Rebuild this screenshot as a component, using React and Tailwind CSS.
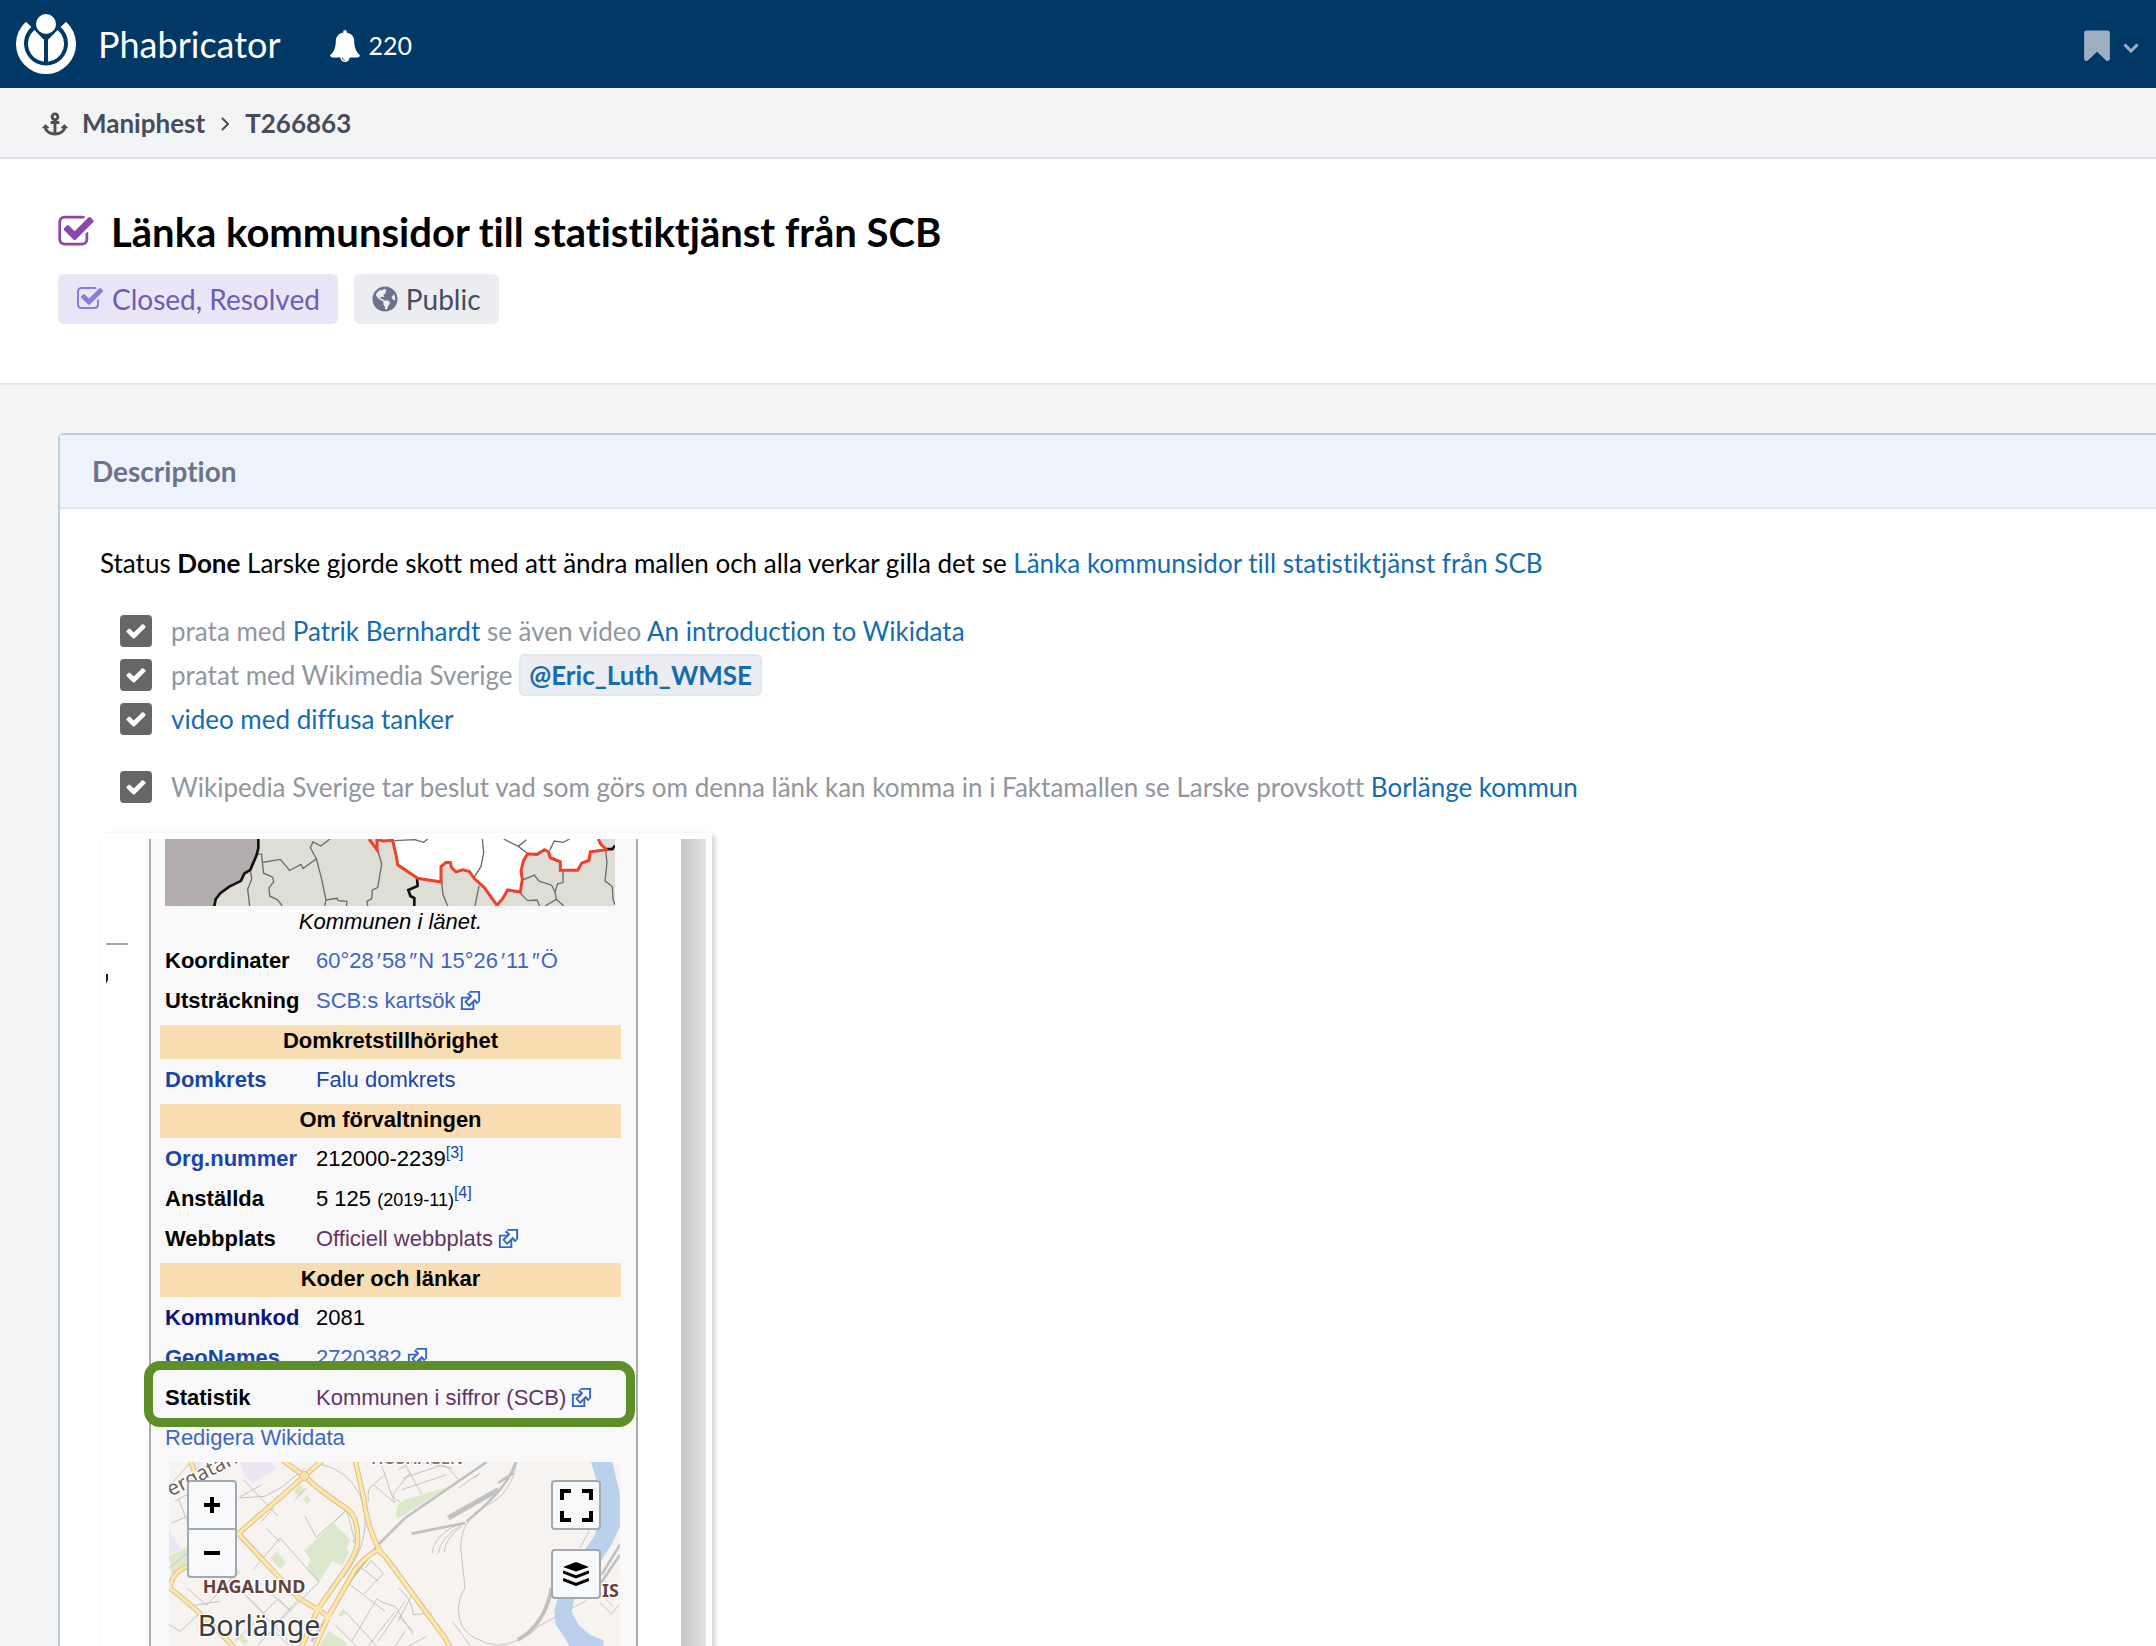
import React from "react";
import { FaAnchor, FaGlobeAmericas } from "react-icons/fa";

const BELL =
  "M912 1696q0-16-16-16-59 0-101.5-42.5t-42.5-101.5q0-16-16-16t-16 16q0 73 51.5 124.5t124.5 51.5q16 0 16-16zm816-288q0 52-38 90t-90 38h-448q0 106-75 181t-181 75-181-75-75-181h-448q-52 0-90-38t-38-90q50-42 91-88t85-119.5 74.5-158.5 50-206 19.5-260q0-152 117-282.5t307-158.5q-8-19-8-39 0-40 28-68t68-28 68 28 28 68q0 20-8 39 190 28 307 158.5t117 282.5q0 139 19.5 260t50 206 74.5 158.5 85 119.5 91 88z";
const CHECK_SQUARE =
  "M1472 930v318q0 119-84.5 203.5t-203.5 84.5h-832q-119 0-203.5-84.5t-84.5-203.5v-832q0-119 84.5-203.5t203.5-84.5h832q63 0 117 25 15 7 18 23 3 17-9 29l-49 49q-10 10-23 10-3 0-9-2-23-6-45-6h-832q-66 0-113 47t-47 113v832q0 66 47 113t113 47h832q66 0 113-47t47-113v-254q0-13 9-22l64-64q10-10 23-10 6 0 12 3 20 8 20 29zm231-489l-814 814q-24 24-57 24t-57-24l-430-430q-24-24-24-57t24-57l110-110q24-24 57-24t57 24l263 263 647-647q24-24 57-24t57 24l110 110q24 24 24 57t-24 57z";
const BOOKMARK =
  "M1420 128q23 0 44 9 33 13 52.5 41t19.5 62v1289q0 34-19.5 62t-52.5 41q-19 8-44 8-48 0-83-32l-441-424-441 424q-36 33-83 33-23 0-44-9-33-13-52.5-41t-19.5-62v-1289q0-34 19.5-62t52.5-41q21-9 44-9h1048z";
const CHECK =
  "M1671 566q0 40-28 68l-724 724-136 136q-28 28-68 28t-68-28l-136-136-362-362q-28-28-28-68t28-68l136-136q28-28 68-28t68 28l294 295 656-657q28-28 68-28t68 28l136 136q28 28 28 68z";

function Glyph({ d, className }) {
  return (
    <svg viewBox="0 0 1792 1792" className={className} fill="currentColor" aria-hidden="true">
      <path d={d} />
    </svg>
  );
}

function Logo() {
  return (
    <svg viewBox="48 42 180 180" className="size-[60px]" fill="#fff" aria-hidden="true">
      <circle cx="138" cy="72" r="30" />
      <path d="M78 65A90 90 0 1 0 198 65L182 81A66 66 0 1 1 94 81Z" />
      <path d="M103 90L132 119V185A54 54 0 0 1 103 90ZM173 90L144 119V185A54 54 0 0 0 173 90Z" />
    </svg>
  );
}

function A({ children, className = "text-[#136cb2]" }) {
  return (
    <a href="#" className={className}>
      {children}
    </a>
  );
}

function Task({ children }) {
  return (
    <li>
      <label className="flex h-11 items-center gap-[19px]">
        <span className="grid">
          <input
            type="checkbox"
            defaultChecked
            className="col-start-1 row-start-1 size-8 appearance-none rounded bg-[#666]"
          />
          <Glyph
            d={CHECK}
            className="pointer-events-none col-start-1 row-start-1 size-[22px] place-self-center text-white"
          />
        </span>
        <span className="text-[#92969d]">{children}</span>
      </label>
    </li>
  );
}

function External() {
  return (
    <svg viewBox="0 0 12 12" className="ml-1 inline-block size-[23px] align-[-4px]" aria-hidden="true">
      <path fill="#fff" stroke="#36c" d="M1.5 4.518h5.982V10.5H1.5z" />
      <path fill="#36c" d="M5.765 1H11v5.39L9.427 7.937l-1.31-1.31L5.393 9.35l-2.69-2.688 2.81-2.808L4.2 2.544z" />
      <path fill="#fff" d="m9.995 2.004.022 4.885L8.2 5.07 5.32 7.95 4.09 6.723l2.882-2.88-1.85-1.852z" />
    </svg>
  );
}

function Prime({ children }) {
  return <span className="px-0.5 italic">{children}</span>;
}

function Row({ label, children }) {
  return (
    <tr className="h-10">
      <th scope="row" className="p-0 pl-[5px] text-left">
        {label}
      </th>
      <td className="p-0">{children}</td>
    </tr>
  );
}

function Band({ children }) {
  return (
    <tr className="h-[39px]">
      <th colSpan={2} scope="colgroup" className="p-0 align-top">
        <div className="mt-1 h-[34px] bg-[#f9ddb2] leading-8">{children}</div>
      </th>
    </tr>
  );
}

function CountyMap() {
  return (
    <svg viewBox="62 30 1350 200" className="ml-[5px] h-[67px] w-[450px]" preserveAspectRatio="none" role="img" aria-label="Karta över länet">
      <rect x="62" y="30" width="1350" height="200" fill="#deded6" />
      <path fill="#b3adad" d="M62 30H342L338 75 318 122 300 133 290 155 255 172 228 192 214 210 210 230H62Z" />
      <path
        fill="#fff"
        d="M716 36L745 34 756 82 760 107 820 147 890 158V112L920 100 935 128 975 127 990 148 1020 175 1058 230 1090 182 1128 188 1134 150 1130 125 1150 74 1210 62 1248 98V123H1300L1338 68 1386 60 1362 30H716Z"
      />
      <path fill="#deded6" d="M1134 150L1130 125 1150 74 1178 76 1200 62 1212 68 1218 86 1248 98V123H1300V200H1128Z" />
      <g fill="none" stroke="#6b6b70" strokeWidth="4">
        <path d="M338 75H352L354 100 408 91 436 124 470 106 476 118 516 89 498 56 506 39 529 51 557 30M354 100L358 132 385 144 388 158 374 176 376 200 400 212 414 230M516 89L532 150 545 212 578 207 582 214 608 216 606 230M545 212L541 230M318 122L322 150 310 180 316 230M700 62L712 105 700 175 684 182 682 208 668 216 670 230" />
        <path d="M750 35L812 32 838 40 850 30M1014 30L1018 70 1010 112 988 146M892 158L896 196 910 230M1004 170L992 230M1078 30L1122 52 1148 72M1122 52L1146 32M1216 64L1230 36 1256 40 1276 30M1136 152L1170 138 1184 156 1222 168 1232 188 1240 164 1256 160V124M1232 188L1236 210 1202 230M1236 210L1258 230M1128 192L1150 214 1178 212 1186 230M1384 64L1388 100 1382 155 1404 172 1406 210 1412 226" />
      </g>
      <path fill="none" stroke="#111" strokeWidth="8" d="M342 30V58L336 80 318 122 300 133 290 155 255 172 228 192 214 210 210 230" />
      <path fill="none" stroke="#111" strokeWidth="8" d="M818 148L820 170 792 182 798 200 810 206V230M1386 60H1404L1412 50" />
      <path
        fill="none"
        stroke="#ee4129"
        strokeWidth="9"
        d="M674 30L698 62V30L716 36 745 34 756 82 760 107 820 147 890 158V112L905 100H918L922 116 935 128 955 122 975 127 990 148 1020 175 1058 228 1075 208 1090 182 1128 188 1134 150 1130 125 1138 94 1150 74 1178 76 1200 62 1212 68 1218 86 1248 98V123H1300L1312 102 1334 94 1338 68 1386 62 1368 44 1362 30"
      />
    </svg>
  );
}

const ROADS =
  "M350 15L418 64 472 18M418 64L355 120 220 237 330 355 400 430 458 464 490 486M418 64Q460 105 545 162Q580 185 578 262Q575 300 520 375L458 464M570 15Q585 80 596 130Q605 210 640 280Q650 300 660 305L745 420 840 550 880 622M640 285Q600 305 570 345L490 486 430 622M490 486L458 464 400 600M75 15L90 55M66 335Q20 355 14 400Q60 435 120 490L220 590";

function TownMap() {
  return (
    <svg viewBox="12 22 1353 600" className="h-[200px] w-[451px]" role="img" aria-label="Karta över Borlänge">
      <rect x="12" y="22" width="1353" height="600" fill="#f7f3f0" />
      <path fill="#ece6f4" d="M225 22H320L335 42 265 85 238 65ZM75 22H115L90 60ZM12 225L48 282 12 302Z" />
      <path
        fill="#dbe8cb"
        d="M506 205L556 255 545 282 552 295 532 334 502 318 462 382 426 346 436 312 418 288ZM385 110L404 90 420 106 402 126ZM414 134L426 122 438 136 426 148ZM315 310L336 290 363 324 345 342ZM12 305L66 276V330L20 362ZM692 180L700 148 720 135 850 96 700 192ZM465 570L492 528 545 565 545 622H465ZM520 480L535 462 542 474 528 488ZM190 380L220 344 226 355 195 380ZM215 550L232 540 250 560 240 572Z"
      />
      <path fill="#b9d1ec" d="M1278 22H1342L1365 120V215L1342 265 1305 325 1250 300 1290 240 1305 180V110ZM1180 430H1228L1220 470 1240 510 1275 540 1315 556 1318 622H1240L1200 550 1172 510 1168 465Z" />
      <g fill="none" stroke="#c4c4c4" strokeWidth="3">
        <path d="M12 95L75 25M30 140L66 120M20 205L68 185M40 130L66 200M225 130L300 125 350 98 420 40M235 75L338 184M290 90L220 130M12 340L66 296M290 200L325 160M302 220L345 262M265 345L345 250 462 382 375 468 300 400M215 395L302 480M420 185L454 248M454 248L545 166L570 260M508 202L545 166M560 258L580 266M390 135L425 100M68 455L165 440M66 400L125 452 200 370M340 432L210 560M340 432L375 468 280 570M45 530L100 480M12 510L45 530M395 440L320 520 370 570M245 425L400 590" />
        <path d="M470 30Q545 45 585 120Q610 190 595 250Q585 300 535 370M600 340L618 318 655 356 595 420M555 390L660 470M590 340L640 380M636 432L560 560M636 432Q650 445 690 455L745 540M510 510L600 600M690 470L590 600M720 440L640 560M540 470L640 580M720 530L680 590" />
        <path d="M610 140Q605 100 625 90L660 60 645 22M660 60Q670 100 690 145M625 90L690 145M720 30L770 118M715 70L835 30M710 105L845 60M745 22L700 45M850 40L880 75M815 22L850 40M705 140Q675 130 690 110L735 55M760 22L860 40M930 70L945 55 880 100" />
        <path d="M1055 22Q1040 120 960 155Q890 190 887 280L900 400Q880 430 880 470Q885 530 930 550Q1000 590 1060 555Q1100 540 1120 515L1260 440 1270 430M1272 230L1245 280M862 500L915 572M1306 445L1340 478 1362 450M1325 435L1345 455M802 296Q805 240 890 205M820 296Q825 250 890 210M838 292Q840 250 890 215" />
        <path d="M700 400Q740 430 745 480M745 480L800 475M700 485L745 530M720 580L785 545M700 500L740 420" />
      </g>
      <g fill="none" stroke="#c1c1c1">
        <path strokeWidth="8" d="M965 22L720 190 640 270 560 372 440 560M740 237L900 205" />
        <path strokeWidth="15" d="M850 190L1000 105" />
        <path strokeWidth="8" d="M1000 85L1045 55M1052 22Q1030 100 905 200M1365 270L1310 360" />
        <path strokeWidth="12" d="M1160 400Q1140 510 1058 556" />
        <path strokeWidth="8" d="M1365 300L1308 385" />
      </g>
      <path fill="none" stroke="#e3bd86" strokeWidth="16" strokeLinejoin="round" d={ROADS} />
      <path fill="none" stroke="#fbe8ac" strokeWidth="10" strokeLinejoin="round" d={ROADS} />
      <circle cx="418" cy="64" r="13" fill="#fbe8ac" stroke="#e3bd86" strokeWidth="3" />
      <circle cx="418" cy="64" r="4" fill="#fff" stroke="#e3bd86" strokeWidth="2" />
      <circle cx="458" cy="464" r="11" fill="#fbe8ac" />
      <circle cx="490" cy="486" r="11" fill="#fbe8ac" />
      <g fontFamily="'Noto Sans', sans-serif" stroke="#fff" strokeWidth="8" strokeLinejoin="round" paintOrder="stroke">
        <text x="18" y="126" fontSize="62" fill="#6f6259" transform="rotate(-27 18 126)">ergatan</text>
        <text x="618" y="27" fontSize="50" fontWeight="600" fill="#8a6f69">HUSHAGEN</text>
        <text x="113" y="416" fontSize="54" fontWeight="700" fill="#65403c">HAGALUND</text>
        <text x="98" y="544" fontSize="86" fill="#3d3d3d">Borlänge</text>
        <text x="1311" y="426" fontSize="54" fontWeight="700" fill="#65403c">IS</text>
      </g>
    </svg>
  );
}

const mapButton =
  "grid place-items-center size-[50px] bg-[#f8f9fa] border-2 border-[#a2a9b1] text-black";

export default function App() {
  return (
    <div className="flex h-screen flex-col overflow-hidden bg-[#f3f4f6] font-[Lato,sans-serif] text-[26px] text-black [font-variant-ligatures:none]">
      <header className="flex h-[88px] shrink-0 items-center bg-[#003866] pr-[17px] pl-4 text-white">
        <a href="#" className="flex items-center gap-[22px] text-[36px]">
          <Logo />
          Phabricator
        </a>
        <button type="button" className="ml-12 flex items-center gap-2 pt-1 text-[25px]">
          <Glyph d={BELL} className="size-8" />
          220
        </button>
        <button type="button" aria-label="Bookmarks" className="ml-auto flex items-center gap-2 pt-1 text-[#9fafc2]">
          <Glyph d={BOOKMARK} className="size-9" />
          <svg viewBox="0 0 16 10" className="mt-1 h-[10px] w-4" fill="none" stroke="currentColor" strokeWidth="3" aria-hidden="true">
            <path d="M1.5 1.5L8 8 14.5 1.5" />
          </svg>
        </button>
      </header>

      <nav aria-label="Breadcrumb" className="flex h-[71px] shrink-0 items-center border-b-2 border-[#dfe1e4] pt-0.5 pl-[42px] font-bold text-[#464c5c]">
        <FaAnchor className="size-[26px] text-[#4e4e4e]" aria-hidden="true" />
        <a href="#" className="ml-[14px]">Maniphest</a>
        <svg viewBox="0 0 8 14" className="mx-4 h-[14px] w-2" fill="none" stroke="#4e4e4e" strokeWidth="2" aria-hidden="true">
          <path d="M1 1L7 7 1 13" />
        </svg>
        <a href="#">T266863</a>
      </nav>

      <section className="h-[226px] shrink-0 border-b-2 border-[#e5e6e8] bg-white pt-[45px] pl-[57px]">
        <h1 className="flex h-14 items-center gap-4 text-[40px] leading-[56px] font-bold">
          <Glyph d={CHECK_SQUARE} className="size-[38px] text-[#8e44ad]" />
          Länka kommunsidor till statistiktjänst från SCB
        </h1>
        <div className="mt-[14px] ml-px flex gap-4 text-[28px]">
          <span className="flex h-[50px] items-center gap-2 rounded-md bg-[#eae6f7] px-[18px] text-[#6e5cb6]">
            <Glyph d={CHECK_SQUARE} className="size-7 text-[#8e7dd8]" />
            Closed, Resolved
          </span>
          <span className="flex h-[50px] items-center gap-2 rounded-md bg-[#ecedf1] px-[18px] text-[#464c5c]">
            <FaGlobeAmericas className="size-[26px] text-[#6b748c]" aria-hidden="true" />
            Public
          </span>
        </div>
      </section>

      <main className="mt-12 ml-[58px] flex-1 rounded-tl-md border-t-2 border-l-2 border-[#bfcfda] bg-white">
        <h2 className="flex h-[74px] items-center border-b-2 border-[#dde8f2] bg-[#eff3fc] pl-8 text-[28px] font-bold text-[#6b748c]">
          Description
        </h2>
        <div className="flex flex-col gap-6 pt-8 pl-10 leading-[44px]">
          <p>
            Status <strong>Done</strong> Larske gjorde skott med att ändra mallen och alla verkar gilla det se{" "}
            <A>Länka kommunsidor till statistiktjänst från SCB</A>
          </p>
          <ul className="pl-5">
            <Task>
              prata med <A>Patrik Bernhardt</A> se även video <A>An introduction to Wikidata</A>
            </Task>
            <Task>
              pratat med Wikimedia Sverige{" "}
              <A className="rounded-md border-2 border-[#dde8f0] bg-[#ecedf3] px-2 py-[3px] font-bold text-[#136cb2]">
                @Eric_Luth_WMSE
              </A>
            </Task>
            <Task>
              <A>video med diffusa tanker</A>
            </Task>
          </ul>
          <ul className="pl-5">
            <Task>
              Wikipedia Sverige tar beslut vad som görs om denna länk kan komma in i Faktamallen se Larske provskott{" "}
              <A>Borlänge kommun</A>
            </Task>
          </ul>

          <figure className="flex w-[612px] p-1.5 font-['Liberation_Sans',sans-serif] text-[22px] shadow-[3px_2px_5px_rgba(0,0,0,0.18)]">
            <div className="w-[43px]">
              <svg viewBox="0 0 43 160" className="h-40 w-[43px]" aria-hidden="true">
                <path stroke="#a2a9b1" strokeWidth="2" d="M0 105H22" />
                <path fill="#222" d="M0 135H2V141L0 145Z" />
              </svg>
            </div>
            <div className="w-[489px] border-x-2 border-[#a9abae] bg-[#f9f9f9] px-[9px]">
              <CountyMap />
              <p className="h-[35px] pr-1.5 text-center leading-8 italic">Kommunen i länet.</p>
              <div className="relative">
                <table className="w-[461px] table-fixed border-collapse leading-8">
                  <colgroup>
                    <col className="w-[156px]" />
                    <col />
                  </colgroup>
                  <tbody>
                    <Row label="Koordinater">
                      <A className="text-[#3f67bf]">
                        60°28<Prime>′</Prime>58<Prime>″</Prime>N 15°26<Prime>′</Prime>11<Prime>″</Prime>Ö
                      </A>
                    </Row>
                    <Row label="Utsträckning">
                      <A className="text-[#3f67bf]">SCB:s kartsök<External /></A>
                    </Row>
                    <Band>Domkretstillhörighet</Band>
                    <Row label={<A className="text-[#1a45a8]">Domkrets</A>}>
                      <A className="text-[#1a45a8]">Falu domkrets</A>
                    </Row>
                    <Band>Om förvaltningen</Band>
                    <Row label={<A className="text-[#1a45a8]">Org.nummer</A>}>
                      212000-2239<sup className="text-base leading-none"><A className="text-[#1a45a8]">[3]</A></sup>
                    </Row>
                    <Row label="Anställda">
                      5 125 <span className="text-lg leading-none">(2019-11)</span>
                      <sup className="text-base leading-none"><A className="text-[#1a45a8]">[4]</A></sup>
                    </Row>
                    <Row label="Webbplats">
                      <A className="text-[#663366]">Officiell webbplats<External /></A>
                    </Row>
                    <Band>Koder och länkar</Band>
                    <Row label={<A className="text-[#0b1480]">Kommunkod</A>}>2081</Row>
                    <Row label={<A className="text-[#1a45a8]">GeoNames</A>}>
                      <A className="text-[#3f67bf]">2720382<External /></A>
                    </Row>
                    <Row label="Statistik">
                      <A className="text-[#663366]">Kommunen i siffror (SCB)<External /></A>
                    </Row>
                  </tbody>
                </table>
                {/* highlight drawn round the Statistik row */}
                <div className="pointer-events-none absolute -right-2 -bottom-[9px] -left-4 h-[66px] rounded-2xl border-[9px] border-[#5e8e29]" />
              </div>
              <p className="h-11 pl-[5px] leading-10">
                <A className="text-[#3f67bf]">Redigera Wikidata</A>
              </p>
              <div className="relative ml-[9px] w-[451px]">
                <TownMap />
                <div className="absolute top-[18px] left-[18px] flex flex-col">
                  <button type="button" aria-label="Zooma in" className={mapButton + " rounded-t"}>
                    <svg viewBox="0 0 16 16" className="size-4" stroke="currentColor" strokeWidth="4" aria-hidden="true">
                      <path d="M8 0V16M0 8H16" />
                    </svg>
                  </button>
                  <button type="button" aria-label="Zooma ut" className={mapButton + " -mt-0.5 rounded-b"}>
                    <svg viewBox="0 0 16 16" className="size-4" stroke="currentColor" strokeWidth="4" aria-hidden="true">
                      <path d="M0 8H16" />
                    </svg>
                  </button>
                </div>
                <div className="absolute top-[18px] right-[19px] flex flex-col gap-[19px]">
                  <button type="button" aria-label="Helskärm" className={mapButton + " rounded"}>
                    <svg viewBox="0 0 33 33" className="size-[33px]" fill="none" stroke="currentColor" strokeWidth="4" aria-hidden="true">
                      <path d="M11 2H2V11M22 2H31V11M11 31H2V22M22 31H31V22" />
                    </svg>
                  </button>
                  <button type="button" aria-label="Lager" className={mapButton + " rounded"}>
                    <svg viewBox="0 0 26 24" className="h-6 w-[26px]" aria-hidden="true">
                      <path d="M13 0L26 5 13 9.500 0 5Z" />
                      <path fill="none" stroke="currentColor" strokeWidth="3" d="M0 10L13 15 26 10M0 17.500L13 22.500 26 17.500" />
                    </svg>
                  </button>
                </div>
              </div>
            </div>
            <div className="ml-auto w-[25px] bg-linear-to-r from-[#c6c6c6] to-[#e2e2e2]" />
          </figure>
        </div>
      </main>
    </div>
  );
}
